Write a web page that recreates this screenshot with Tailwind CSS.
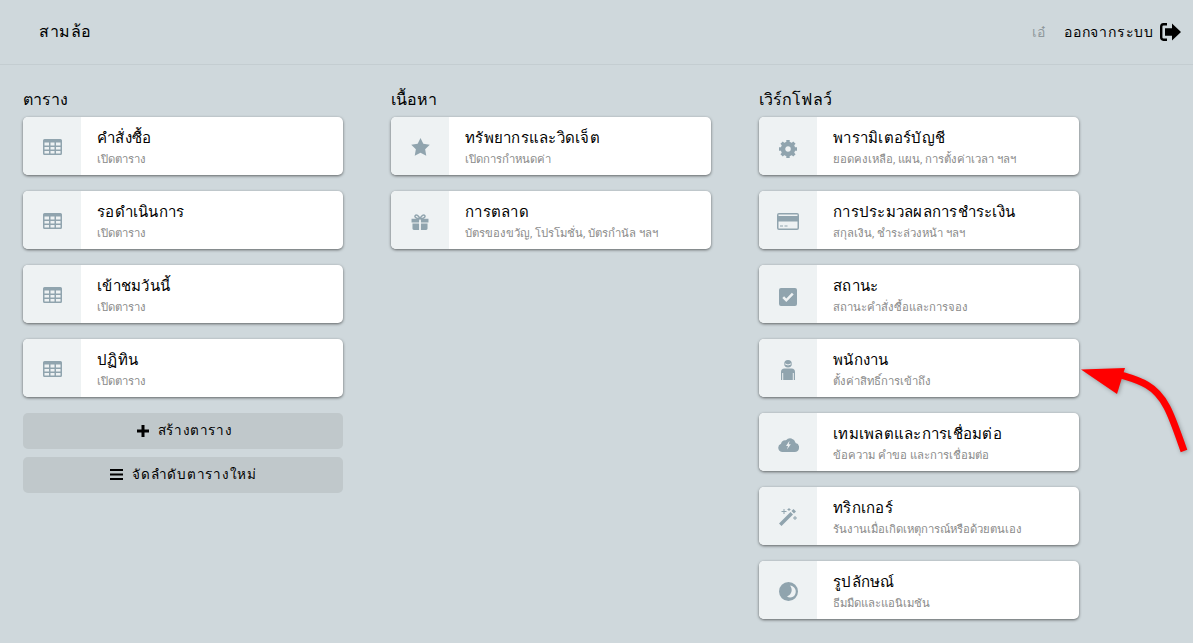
<!DOCTYPE html>
<html lang="th">
<head>
    <meta charset="UTF-8">
    <title>สามล้อ</title>
    <script src="https://cdn.jsdelivr.net/npm/@tailwindcss/browser@4"></script>
</head>
<body class="bg-[#cfd8dc] text-black font-['Roboto','Noto_Sans',sans-serif] h-[643px] overflow-hidden relative">
    <!-- header -->
    <header class="h-[65px] border-b border-[#c4cdd1] flex items-center pl-[39px] pr-[12px]">
        <div class="text-[16px] tracking-[0.5px]">สามล้อ</div>
        <div class="ml-auto flex items-center">
            <span class="text-[14px] text-[#8f989c] mr-[19px]">เอ๋</span>
            <span class="text-[14px] font-medium tracking-[0.8px] mr-[6px]">ออกจากระบบ</span>
            <svg class="w-[21px] h-[18px]" viewBox="0 0 21 18"><path d="M7 1.200H3.500A2.500 2.500 0 0 0 1.200 3.700v10.600a2.500 2.500 0 0 0 2.300 2.500H7" fill="none" stroke="#000" stroke-width="2.400"/><path d="M12 .5 21 9l-9 8.500v-4.800H5V5.300h7z"/></svg>
        </div>
    </header>

    <main class="pt-[25px] pl-[23px] flex gap-[48px]">
        <!-- tables -->
        <section class="w-[320px]">
            <h2 class="text-[16px] leading-[19px] h-[27px] tracking-[0.1px]">ตาราง</h2>
            <div class="flex flex-col gap-[16px]">
                <a class="flex h-[58px] bg-white rounded-[5px] overflow-hidden shadow-[0_1px_3px_rgba(0,0,0,0.55)]">
                    <div class="w-[58px] bg-[#eef2f3] flex items-center justify-center pt-[2px]"><svg class="w-[19px] h-[16px]" viewBox="0 0 19 16"><path fill="#90a4ae" fill-rule="evenodd" d="M1.500 0h16A1.500 1.500 0 0 1 19 1.500v13a1.500 1.500 0 0 1-1.500 1.500h-16A1.500 1.500 0 0 1 0 14.500v-13A1.500 1.500 0 0 1 1.500 0zM1.500 3.500v3h4.500v-3zm6 0v3h4v-3zm5.500 0v3h4.500v-3zM1.500 8v2.500h4.500V8zm6 0v2.500h4V8zm5.500 0v2.500h4.500V8zM1.500 12v2.500h4.500V12zm6 0v2.500h4V12zm5.500 0v2.500h4.500V12z"/></svg></div>
                    <div class="pl-[16px] pt-[9px]"><div class="text-[15px] tracking-[0.25px] leading-[24px] font-medium">คำสั่งซื้อ</div><div class="text-[11.300px] leading-[17px] mt-[1px] text-[#8a8a8a]">เปิดตาราง</div></div>
                </a>
                <a class="flex h-[58px] bg-white rounded-[5px] overflow-hidden shadow-[0_1px_3px_rgba(0,0,0,0.55)]">
                    <div class="w-[58px] bg-[#eef2f3] flex items-center justify-center pt-[2px]"><svg class="w-[19px] h-[16px]" viewBox="0 0 19 16"><path fill="#90a4ae" fill-rule="evenodd" d="M1.500 0h16A1.500 1.500 0 0 1 19 1.500v13a1.500 1.500 0 0 1-1.500 1.500h-16A1.500 1.500 0 0 1 0 14.500v-13A1.500 1.500 0 0 1 1.500 0zM1.500 3.500v3h4.500v-3zm6 0v3h4v-3zm5.500 0v3h4.500v-3zM1.500 8v2.500h4.500V8zm6 0v2.500h4V8zm5.500 0v2.500h4.500V8zM1.500 12v2.500h4.500V12zm6 0v2.500h4V12zm5.500 0v2.500h4.500V12z"/></svg></div>
                    <div class="pl-[16px] pt-[9px]"><div class="text-[15px] tracking-[0.25px] leading-[24px] font-medium">รอดำเนินการ</div><div class="text-[11.300px] leading-[17px] mt-[1px] text-[#8a8a8a]">เปิดตาราง</div></div>
                </a>
                <a class="flex h-[58px] bg-white rounded-[5px] overflow-hidden shadow-[0_1px_3px_rgba(0,0,0,0.55)]">
                    <div class="w-[58px] bg-[#eef2f3] flex items-center justify-center pt-[2px]"><svg class="w-[19px] h-[16px]" viewBox="0 0 19 16"><path fill="#90a4ae" fill-rule="evenodd" d="M1.500 0h16A1.500 1.500 0 0 1 19 1.500v13a1.500 1.500 0 0 1-1.500 1.500h-16A1.500 1.500 0 0 1 0 14.500v-13A1.500 1.500 0 0 1 1.500 0zM1.500 3.500v3h4.500v-3zm6 0v3h4v-3zm5.500 0v3h4.500v-3zM1.500 8v2.500h4.500V8zm6 0v2.500h4V8zm5.500 0v2.500h4.500V8zM1.500 12v2.500h4.500V12zm6 0v2.500h4V12zm5.500 0v2.500h4.500V12z"/></svg></div>
                    <div class="pl-[16px] pt-[9px]"><div class="text-[15px] tracking-[0.25px] leading-[24px] font-medium">เข้าชมวันนี้</div><div class="text-[11.300px] leading-[17px] mt-[1px] text-[#8a8a8a]">เปิดตาราง</div></div>
                </a>
                <a class="flex h-[58px] bg-white rounded-[5px] overflow-hidden shadow-[0_1px_3px_rgba(0,0,0,0.55)]">
                    <div class="w-[58px] bg-[#eef2f3] flex items-center justify-center pt-[2px]"><svg class="w-[19px] h-[16px]" viewBox="0 0 19 16"><path fill="#90a4ae" fill-rule="evenodd" d="M1.500 0h16A1.500 1.500 0 0 1 19 1.500v13a1.500 1.500 0 0 1-1.500 1.500h-16A1.500 1.500 0 0 1 0 14.500v-13A1.500 1.500 0 0 1 1.500 0zM1.500 3.500v3h4.500v-3zm6 0v3h4v-3zm5.500 0v3h4.500v-3zM1.500 8v2.500h4.500V8zm6 0v2.500h4V8zm5.500 0v2.500h4.500V8zM1.500 12v2.500h4.500V12zm6 0v2.500h4V12zm5.500 0v2.500h4.500V12z"/></svg></div>
                    <div class="pl-[16px] pt-[9px]"><div class="text-[15px] tracking-[0.25px] leading-[24px] font-medium">ปฏิทิน</div><div class="text-[11.300px] leading-[17px] mt-[1px] text-[#8a8a8a]">เปิดตาราง</div></div>
                </a>
            </div>
            <div class="mt-[16px] flex flex-col gap-[8px]">
                <button class="h-[36px] bg-[#c0c8cb] rounded-[5px] flex items-center justify-center gap-[9px] text-[13.500px] font-medium tracking-[0.6px] pl-[3px] pb-[1px]">
                    <svg class="w-[12px] h-[12px]" viewBox="0 0 12 12"><path d="M4.500 0h3v4.500H12v3H7.500V12h-3V7.500H0v-3h4.500z"/></svg>สร้างตาราง
                </button>
                <button class="h-[36px] bg-[#c0c8cb] rounded-[5px] flex items-center justify-center gap-[9px] text-[13.500px] font-medium tracking-[0.75px] pl-[1px] pb-[1px]">
                    <svg class="w-[13px] h-[11px]" viewBox="0 0 13 11"><path d="M0 0h13v2H0zM0 4.500h13v2H0zM0 9h13v2H0z"/></svg>จัดลำดับตารางใหม่
                </button>
            </div>
        </section>

        <!-- content -->
        <section class="w-[320px]">
            <h2 class="text-[16px] leading-[19px] h-[27px] tracking-[0.1px]">เนื้อหา</h2>
            <div class="flex flex-col gap-[16px]">
                <a class="flex h-[58px] bg-white rounded-[5px] overflow-hidden shadow-[0_1px_3px_rgba(0,0,0,0.55)]">
                    <div class="w-[58px] bg-[#eef2f3] flex items-center justify-center pt-[2px]"><svg class="w-[19px] h-[18px]" viewBox="0 0 20 19"><path fill="#90a4ae" d="M10 0l3 6.200 6.800 1-4.900 4.800 1.200 6.800L10 15.600l-6.100 3.200L5.100 12 .2 7.200l6.800-1z"/></svg></div>
                    <div class="pl-[16px] pt-[9px]"><div class="text-[15px] tracking-[0.25px] leading-[24px] font-medium">ทรัพยากรและวิดเจ็ต</div><div class="text-[11.300px] leading-[17px] mt-[1px] text-[#8a8a8a]">เปิดการกำหนดค่า</div></div>
                </a>
                <a class="flex h-[58px] bg-white rounded-[5px] overflow-hidden shadow-[0_1px_3px_rgba(0,0,0,0.55)]">
                    <div class="w-[58px] bg-[#eef2f3] flex items-center justify-center pt-[4px]"><svg class="w-[18px] h-[16px]" viewBox="0 0 18 17"><path fill="#90a4ae" d="M0 5h8v4H0zM10 5h8v4h-8zM1 10h7v7H2.500A1.500 1.500 0 0 1 1 15.500zM10 10h7v5.500a1.500 1.500 0 0 1-1.500 1.500H10z"/><path fill="none" stroke="#90a4ae" stroke-width="1.500" d="M9 5C7.500 1.500 5 .5 4 1.500S4 5 9 5c5 0 6-2.500 5-3.500S10.500 1.500 9 5z"/></svg></div>
                    <div class="pl-[16px] pt-[9px]"><div class="text-[15px] tracking-[0.25px] leading-[24px] font-medium">การตลาด</div><div class="text-[11.300px] leading-[17px] mt-[1px] text-[#8a8a8a]">บัตรของขวัญ, โปรโมชั่น, บัตรกำนัล ฯลฯ</div></div>
                </a>
            </div>
        </section>

        <!-- workflow -->
        <section class="w-[320px]">
            <h2 class="text-[16px] leading-[19px] h-[27px] tracking-[0.1px]">เวิร์กโฟลว์</h2>
            <div class="flex flex-col gap-[16px]">
                <a class="flex h-[58px] bg-white rounded-[5px] overflow-hidden shadow-[0_1px_3px_rgba(0,0,0,0.55)]">
                    <div class="w-[58px] bg-[#eef2f3] flex items-center justify-center pt-[6px]"><svg class="w-[18px] h-[18px]" viewBox="0 0 18 18"><circle cx="9" cy="9" r="5" fill="none" stroke="#90a4ae" stroke-width="4.500"/><path fill="none" stroke="#90a4ae" stroke-width="3.400" d="M9 0v3M9 15v3M0 9h3M15 9h3M2.600 2.600l2.100 2.100M13.300 13.300l2.100 2.100M2.600 15.400l2.100-2.100M13.300 4.700l2.100-2.100"/></svg></div>
                    <div class="pl-[16px] pt-[9px]"><div class="text-[15px] tracking-[0.25px] leading-[24px] font-medium">พารามิเตอร์บัญชี</div><div class="text-[11.300px] leading-[17px] mt-[1px] text-[#8a8a8a]">ยอดคงเหลือ, แผน, การตั้งค่าเวลา ฯลฯ</div></div>
                </a>
                <a class="flex h-[58px] bg-white rounded-[5px] overflow-hidden shadow-[0_1px_3px_rgba(0,0,0,0.55)]">
                    <div class="w-[58px] bg-[#eef2f3] flex items-center justify-center pt-[3px]"><svg class="w-[22px] h-[17px]" viewBox="0 0 22 17"><path fill="#90a4ae" fill-rule="evenodd" d="M2 0h18a2 2 0 0 1 2 2v13a2 2 0 0 1-2 2H2a2 2 0 0 1-2-2V2a2 2 0 0 1 2-2zM1.500 8.500v6.500a.500.500 0 0 0 .500.500h18a.500.500 0 0 0 .500-.500V8.500zM3 12.500h3v1H3zm4.500 0h3v1h-3zM1.500 1.500V3h19V1.500z"/></svg></div>
                    <div class="pl-[16px] pt-[9px]"><div class="text-[15px] tracking-[0.25px] leading-[24px] font-medium">การประมวลผลการชำระเงิน</div><div class="text-[11.300px] leading-[17px] mt-[1px] text-[#8a8a8a]">สกุลเงิน, ชำระล่วงหน้า ฯลฯ</div></div>
                </a>
                <a class="flex h-[58px] bg-white rounded-[5px] overflow-hidden shadow-[0_1px_3px_rgba(0,0,0,0.55)]">
                    <div class="w-[58px] bg-[#eef2f3] flex items-center justify-center pt-[6px]"><svg class="w-[18px] h-[18px]" viewBox="0 0 18 18"><path fill="#90a4ae" fill-rule="evenodd" d="M2 0h14a2 2 0 0 1 2 2v14a2 2 0 0 1-2 2H2a2 2 0 0 1-2-2V2a2 2 0 0 1 2-2zM7.300 14l7.400-7.400-1.800-1.800-5.600 5.600-2.200-2.200-1.800 1.800z"/></svg></div>
                    <div class="pl-[16px] pt-[9px]"><div class="text-[15px] tracking-[0.25px] leading-[24px] font-medium">สถานะ</div><div class="text-[11.300px] leading-[17px] mt-[1px] text-[#8a8a8a]">สถานะคำสั่งซื้อและการจอง</div></div>
                </a>
                <a class="flex h-[58px] bg-white rounded-[5px] overflow-hidden shadow-[0_1px_3px_rgba(0,0,0,0.55)]">
                    <div class="w-[58px] bg-[#eef2f3] flex items-center justify-center pt-[4px]"><svg class="w-[14px] h-[20px]" viewBox="0 0 14 20"><circle cx="7" cy="3.800" r="3.800" fill="#90a4ae"/><path fill="none" stroke="#eef2f3" stroke-width="1" d="M3.800 3.800q3.200 2.400 6.400 0"/><path fill="#90a4ae" d="M3.500 8.500h7A3.500 3.500 0 0 1 14 12v8h-1.200v-7h-1v7H2.200v-7h-1v7H0v-8a3.500 3.500 0 0 1 3.500-3.500z"/></svg></div>
                    <div class="pl-[16px] pt-[9px]"><div class="text-[15px] tracking-[0.25px] leading-[24px] font-medium">พนักงาน</div><div class="text-[11.300px] leading-[17px] mt-[1px] text-[#8a8a8a]">ตั้งค่าสิทธิ์การเข้าถึง</div></div>
                </a>
                <a class="flex h-[58px] bg-white rounded-[5px] overflow-hidden shadow-[0_1px_3px_rgba(0,0,0,0.55)]">
                    <div class="w-[58px] bg-[#eef2f3] flex items-center justify-center pt-[5px]"><svg class="w-[21px] h-[15px]" viewBox="0 0 21 15"><path fill="#90a4ae" fill-rule="evenodd" d="M4.500 15A4.300 4.300 0 0 1 3 6.700 4.500 4.500 0 0 1 8 3.200 5.500 5.500 0 0 1 17.500 5.500v.6A4.500 4.500 0 0 1 16.500 15zM11.500 3.800l-3.500 5.200h2l-1 3.500 3.800-5.200h-2z"/></svg></div>
                    <div class="pl-[16px] pt-[9px]"><div class="text-[15px] tracking-[0.25px] leading-[24px] font-medium">เทมเพลตและการเชื่อมต่อ</div><div class="text-[11.300px] leading-[17px] mt-[1px] text-[#8a8a8a]">ข้อความ คำขอ และการเชื่อมต่อ</div></div>
                </a>
                <a class="flex h-[58px] bg-white rounded-[5px] overflow-hidden shadow-[0_1px_3px_rgba(0,0,0,0.55)]">
                    <div class="w-[58px] bg-[#eef2f3] flex items-center justify-center pt-[2px]"><svg class="w-[18px] h-[18px]" viewBox="0 0 18 18"><path fill="#90a4ae" d="M0 15.500 11.500 4 14 6.500 2.500 18zM12.500 3l2-2L17 3.500l-2 2z"/><path fill="#90a4ae" d="M4.500 1h1v2H7.500v1h-2v2h-1V4h-2V3h2zM15.500 8h1v1.500H18v1h-1.500V12h-1v-1.500H14v-1h1.500zM9.500 0h1v1h1v1h-1v1h-1V2h-1V1h1z"/></svg></div>
                    <div class="pl-[16px] pt-[9px]"><div class="text-[15px] tracking-[0.25px] leading-[24px] font-medium">ทริกเกอร์</div><div class="text-[11.300px] leading-[17px] mt-[1px] text-[#8a8a8a]">รันงานเมื่อเกิดเหตุการณ์หรือด้วยตนเอง</div></div>
                </a>
                <a class="flex h-[58px] bg-white rounded-[5px] overflow-hidden shadow-[0_1px_3px_rgba(0,0,0,0.55)]">
                    <div class="w-[58px] bg-[#eef2f3] flex items-center justify-center pt-[3px]"><svg class="w-[19px] h-[19px]" viewBox="0 0 19 19"><path fill="#90a4ae" fill-rule="evenodd" d="M9.500 0a9.500 9.500 0 1 1 0 19 9.500 9.500 0 0 1 0-19zM11 3.500c1.500 2 2 4 1.500 6S10.500 13.500 8 14.500c1.500 1.300 4 1.500 6 .3s3-3.500 2.700-6-2.700-5-5.700-5.300z"/></svg></div>
                    <div class="pl-[16px] pt-[9px]"><div class="text-[15px] tracking-[0.25px] leading-[24px] font-medium">รูปลักษณ์</div><div class="text-[11.300px] leading-[17px] mt-[1px] text-[#8a8a8a]">ธีมมืดและแอนิเมชัน</div></div>
                </a>
            </div>
        </section>
    </main>

    <!-- red annotation arrow -->
    <svg class="absolute left-0 top-0 w-[1193px] h-[643px] pointer-events-none drop-shadow-[1px_1px_2px_rgba(0,0,0,0.3)]" viewBox="0 0 1193 643">
        <path d="M1184 451C1172 417 1166 396 1147 385 1137 379 1127 377 1118 374" fill="none" stroke="#ff0000" stroke-width="7"/>
        <path d="M1081 369.500 1125 368 1117 394z" fill="#ff0000"/>
    </svg>
</body>
</html>
